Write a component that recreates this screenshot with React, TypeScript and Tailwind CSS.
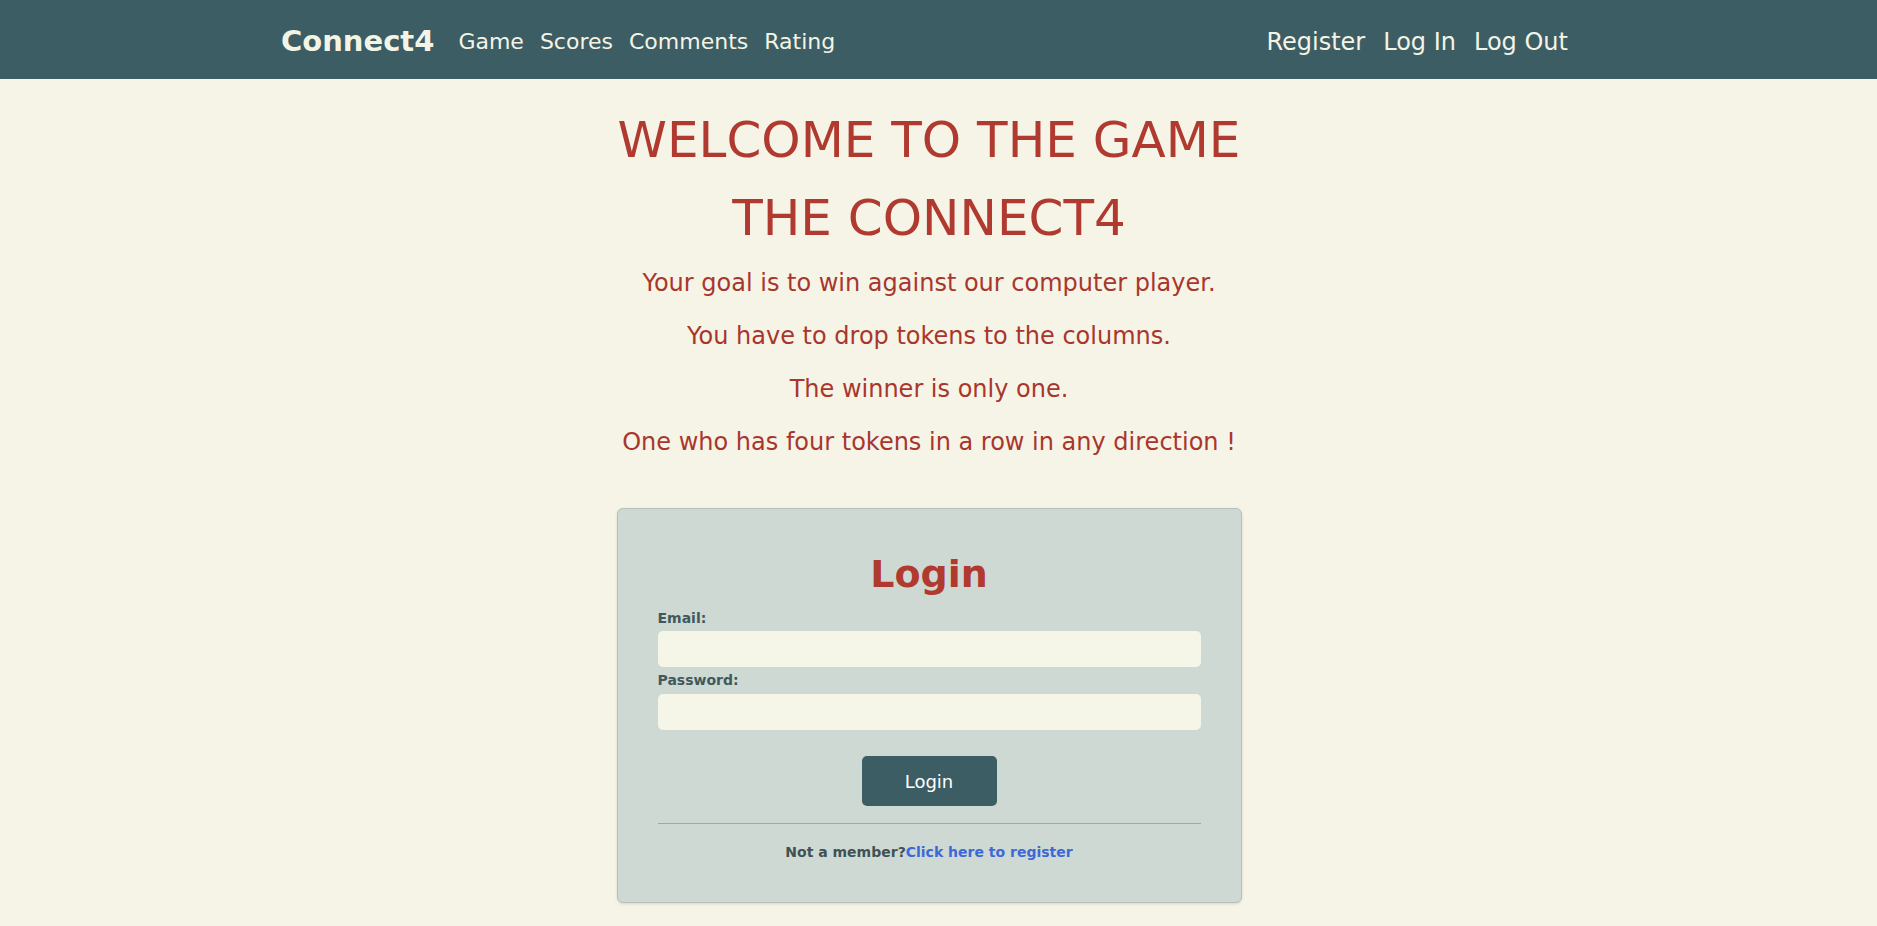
const navLeft = ["Game", "Scores", "Comments", "Rating"];
const navRight = ["Register", "Log In", "Log Out"];

const intro = [
  "Your goal is to win against our computer player.",
  "You have to drop tokens to the columns.",
  "The winner is only one.",
  "One who has four tokens in a row in any direction !",
];

function Navbar() {
  return (
    <nav className="h-[79px] bg-[#3d5d64]">
      <div className="pr-[19px] h-full">
        <div className="mx-auto flex h-full w-[1320px] items-center px-3 pt-1 text-[#f4f4e6]">
          <a href="#" className="mr-4 text-[29px] font-bold">
            Connect4
          </a>
          <ul className="flex">
            {navLeft.map((l) => (
              <li key={l}>
                <a href="#" className="px-2 text-[22px]">
                  {l}
                </a>
              </li>
            ))}
          </ul>
          <ul className="ml-auto flex">
            {navRight.map((l) => (
              <li key={l}>
                <a href="#" className="px-[9px] text-[24px]">
                  {l}
                </a>
              </li>
            ))}
          </ul>
        </div>
      </div>
    </nav>
  );
}

function LoginCard() {
  return (
    <form className="mx-auto mt-[39px] w-[625px] rounded-[6px] border border-[#b7c0bb] bg-[#cfd9d4] px-10 pt-[42px] pb-[40px] shadow-[0_1px_3px_rgba(0,0,0,0.12)]">
      <h2 className="text-center text-[38px] font-bold leading-[46px] text-[#b03a30]">Login</h2>
      <label className="mt-[11px] block text-[14px] font-bold leading-5 text-[#3f5a5c]">Email:</label>
      <input type="email" className="mt-[3px] block h-9 w-full rounded-[5px] bg-[#f5f5e8] outline-none" />
      <label className="mt-[3px] block text-[14px] font-bold leading-5 text-[#3f5a5c]">Password:</label>
      <input type="password" className="mt-1 block h-9 w-full rounded-[5px] bg-[#f5f5e8] outline-none" />
      <div className="mt-[26px] flex justify-center">
        <button type="button" className="h-[50px] w-[135px] rounded-[5px] bg-[#3d5d64] text-[18px] text-white">
          Login
        </button>
      </div>
      <hr className="mt-[17px] border-0 border-t border-[#9ea8a4]" />
      <p className="mt-[18px] text-center text-[14px] font-bold leading-5 text-[#3f5155]">
        Not a member?
        <a href="#" className="text-[#3d69d6]">
          Click here to register
        </a>
      </p>
    </form>
  );
}

export default function App() {
  return (
    <div className="min-h-screen bg-[#f5f4e6] font-['Comic_Sans_MS','DejaVu_Sans',sans-serif]">
      <Navbar />
      <main className="pr-[19px] pt-[22px] pb-6">
        <div className="text-center text-[#b03a30]">
          <h1 className="text-[50px] leading-[79px]">WELCOME TO THE GAME</h1>
          <h1 className="text-[50px] leading-[77px]">THE CONNECT4</h1>
          {intro.map((t) => (
            <p key={t} className="text-[24px] leading-[53px] text-[#a9362d]">
              {t}
            </p>
          ))}
        </div>
        <LoginCard />
      </main>
    </div>
  );
}
